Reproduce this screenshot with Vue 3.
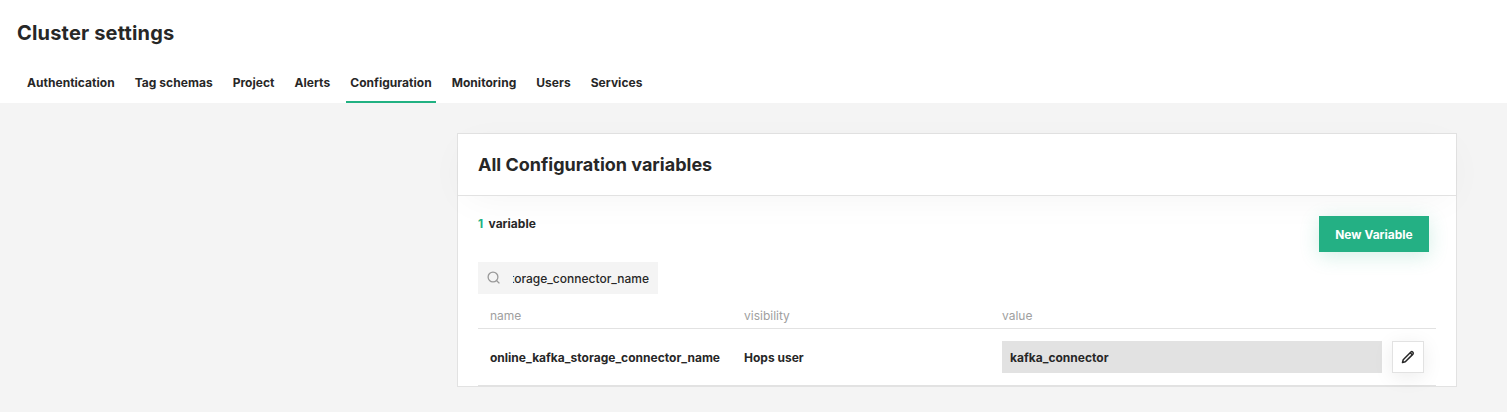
<script setup>
const tabs = ['Authentication', 'Tag schemas', 'Project', 'Alerts', 'Configuration', 'Monitoring', 'Users', 'Services']
const active = 'Configuration'
</script>

<template>
  <div class="page">
    <header class="top">
      <h1>Cluster settings</h1>
      <nav class="tabs">
        <a v-for="t in tabs" :key="t" class="tab" :class="{ active: t === active }">{{ t }}</a>
      </nav>
    </header>
    <main class="main">
      <section class="card">
        <h2 class="card-head">All Configuration variables</h2>
        <div class="card-body">
          <div class="summary">
            <div class="count"><span class="num">1</span>variable</div>
            <button class="primary">New Variable</button>
          </div>
          <label class="search">
            <svg width="14" height="14" viewBox="0 0 14 14" fill="none" stroke="#999" stroke-width="1.3">
              <circle cx="6" cy="6" r="4.9" />
              <path d="M9.5 9.5L12.4 12.4" />
            </svg>
            <span class="query"><span>online_kafka_storage_connector_name</span></span>
          </label>
          <div class="row head">
            <span>name</span><span>visibility</span><span>value</span>
          </div>
          <div class="row item">
            <span class="cell">online_kafka_storage_connector_name</span>
            <span class="cell">Hops user</span>
            <span class="value">kafka_connector</span>
            <button class="edit">
              <svg width="14" height="14" viewBox="0 0 14 14" fill="none" stroke="#272727" stroke-width="1.5" stroke-linejoin="round">
                <path d="M1.5 12.5L2.2 9.7L9.9 2Q10.8 1.2 11.7 2Q12.8 3.1 12 4.1L4.3 11.8Z" />
                <path d="M9.2 2.8L11.2 4.8" />
              </svg>
            </button>
          </div>
        </div>
      </section>
    </main>
  </div>
</template>

<style>
body {
  margin: 0;
  background: #f4f4f4;
}
</style>

<style scoped>
.page {
  height: 412px;
  overflow: hidden;
  background: #f4f4f4;
  color: #272727;
  font: 700 12px/16px Inter, sans-serif;
}
.top {
  height: 103px;
  background: #fff;
  box-sizing: border-box;
  padding: 20px 17px 0;
}
h1 {
  margin: 0;
  font-size: 20px;
  line-height: 26px;
  letter-spacing: 0.18px;
}
.tabs {
  display: flex;
  gap: 12px;
  margin: 17px 0 0 6px;
  letter-spacing: 0.035px;
}
.tab {
  height: 28px;
  padding: 12px 4px 0;
}
.active {
  box-shadow: inset 0 -2px #21b182;
}
.main {
  padding: 30px 0 0 457px;
}
.card {
  width: 1000px;
  height: 254px;
  box-sizing: border-box;
  border: 1px solid #e2e2e2;
  background: #fff;
}
.card-head {
  margin: 0;
  height: 61px;
  padding-left: 20px;
  border-bottom: 1px solid #e2e2e2;
  background: #fff;
  box-shadow: 0 8px 40px -8px rgba(0, 0, 0, 0.05);
  font-size: 18px;
  line-height: 61px;
}
.card-body {
  padding: 20px 20px 0;
}
.summary {
  display: flex;
  justify-content: space-between;
  height: 46px;
  padding-right: 7px;
}
.num {
  margin-right: 5.4px;
  color: #21b182;
}
button {
  font: inherit;
  padding: 0;
  box-sizing: border-box;
}
.primary {
  width: 110px;
  height: 36px;
  padding-top: 2px;
  border: 0;
  background: #24b084;
  color: #fff;
  box-shadow: 0 4px 20px rgba(33, 177, 130, 0.2);
}
.search {
  display: flex;
  align-items: center;
  width: 180px;
  height: 32px;
  box-sizing: border-box;
  padding: 0 9px;
  background: #f4f4f4;
  font-weight: 500;
}
.query {
  display: flex;
  justify-content: flex-end;
  margin-left: 12px;
  padding-top: 2px;
  width: 136px;
  overflow: hidden;
}
.row {
  display: grid;
  grid-template-columns: 254px 258px 380px 32px;
  align-items: center;
  padding-left: 12px;
  border-bottom: 1px solid #e2e2e2;
}
.head {
  height: 34px;
  color: #a0a0a0;
  font-weight: 400;
}
.head span {
  padding-top: 9px;
}
.item {
  height: 56px;
  letter-spacing: 0.01px;
}
.cell {
  padding-top: 2px;
}
.value {
  height: 32px;
  box-sizing: border-box;
  padding: 9px 8px 7px;
  background: #e2e2e2;
}
.edit {
  display: flex;
  align-items: center;
  justify-content: center;
  width: 32px;
  height: 32px;
  margin-left: 10px;
  border: 1px solid #e2e2e2;
  background: #fff;
  box-shadow: 0 4px 20px rgba(0, 0, 0, 0.08);
}
</style>
